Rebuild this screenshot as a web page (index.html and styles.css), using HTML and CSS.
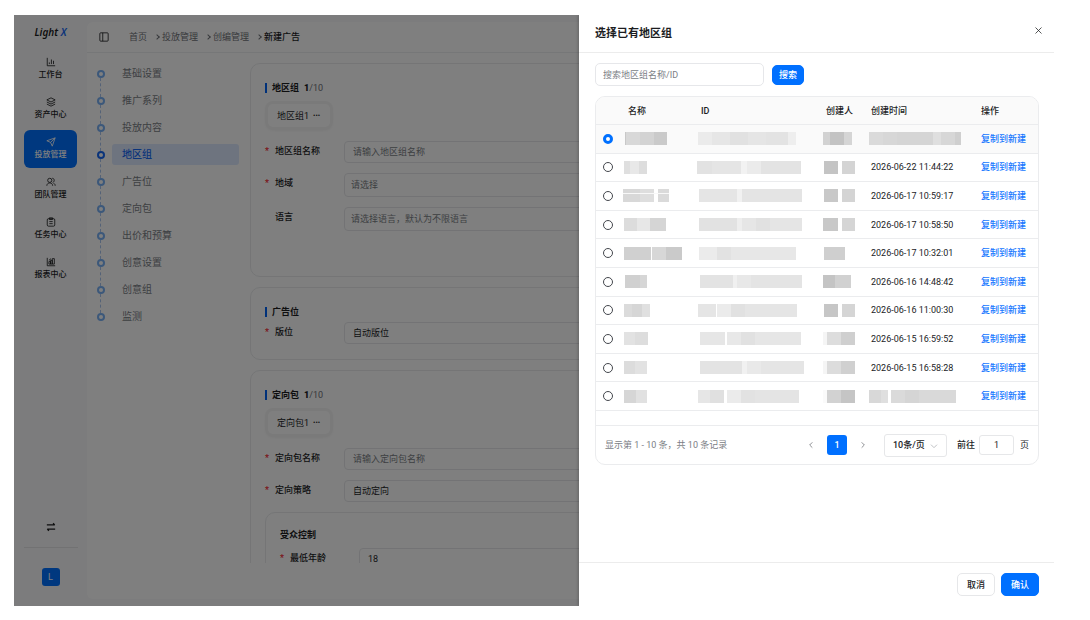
FILE: index.html
```html
<!DOCTYPE html>
<html lang="zh-CN">
<head>
  <meta charset="UTF-8">
  <title>新建广告 - Light X</title>
  <link rel="stylesheet" href="styles.css">
</head>
<body>

  <div class="app">
    <aside class="sidebar">
      <div class="logo">Light <span>X</span></div>
      <nav class="menu">
        <a href="#">
          <svg viewBox="0 0 24 24"><path d="M3 2v19h19M8 17v-4M13 17V6M18 17V9"/></svg>
          工作台
        </a>
        <a href="#">
          <svg viewBox="0 0 24 24"><path d="M12 2 2 7l10 5 10-5zM2 12l10 5 10-5M2 17l10 5 10-5"/></svg>
          资产中心
        </a>
        <a href="#" class="active">
          <svg viewBox="0 0 24 24"><path d="M22 2 2 9l9 4 4 9zM22 2 11 13"/></svg>
          投放管理
        </a>
        <a href="#">
          <svg viewBox="0 0 24 24"><circle cx="9" cy="8" r="5"/><path d="M2 21c0-9 14-9 14 0M15 3c6 0 6 9 1 10M18 15c3 1 4 3 4 6"/></svg>
          团队管理
        </a>
        <a href="#">
          <svg viewBox="0 0 24 24"><rect x="3" y="4" width="18" height="18" rx="3"/><path d="M8 2h8v4H8zM8 11h8M8 16h8"/></svg>
          任务中心
        </a>
        <a href="#">
          <svg viewBox="0 0 24 24"><path d="M3 2v19h19M7 17v-6h4v6zM11 17V8h4v9zM15 17V4h5v13zM7 8l5-4"/></svg>
          报表中心
        </a>
      </nav>
      <div class="sidebar-bottom">
        <button class="switch" aria-label="切换">
          <svg viewBox="0 0 24 24"><path d="M2 7h19M17 3l4 4M22 17H3M7 21l-4-4"/></svg>
        </button>
        <div class="avatar">L</div>
      </div>
    </aside>

    <main class="main">
      <header class="topbar">
        <svg class="toggle" viewBox="0 0 24 24"><rect x="2" y="2" width="20" height="20" rx="2"/><path d="M9 2v20"/></svg>
        <nav class="breadcrumb">
          <a href="#">首页</a>
          <a href="#">投放管理</a>
          <a href="#">创编管理</a>
          <span>新建广告</span>
        </nav>
      </header>

      <div class="workspace">
        <ol class="steps">
          <li><a href="#">基础设置</a></li>
          <li><a href="#">推广系列</a></li>
          <li><a href="#">投放内容</a></li>
          <li class="active"><a href="#">地区组</a></li>
          <li><a href="#">广告位</a></li>
          <li><a href="#">定向包</a></li>
          <li><a href="#">出价和预算</a></li>
          <li><a href="#">创意设置</a></li>
          <li><a href="#">创意组</a></li>
          <li><a href="#">监测</a></li>
        </ol>

        <div class="content">
          <section class="card region-card">
            <h2>地区组 <b>1</b><small>/10</small></h2>
            <button class="tab">地区组1 <span>•••</span></button>
            <div class="field">
              <label class="required" for="regionName">地区组名称</label>
              <input id="regionName" type="text" placeholder="请输入地区组名称">
            </div>
            <div class="field">
              <label class="required" for="region">地域</label>
              <select id="region" class="tall empty"><option>请选择</option></select>
            </div>
            <div class="field">
              <label for="language">语言</label>
              <select id="language" class="tall empty"><option>请选择语言，默认为不限语言</option></select>
            </div>
          </section>

          <section class="card compact">
            <h2>广告位</h2>
            <div class="field">
              <label class="required" for="placement">版位</label>
              <select id="placement"><option>自动版位</option></select>
            </div>
          </section>

          <section class="card">
            <h2>定向包 <b>1</b><small>/10</small></h2>
            <button class="tab">定向包1 <span>•••</span></button>
            <div class="field">
              <label class="required" for="packName">定向包名称</label>
              <input id="packName" type="text" placeholder="请输入定向包名称">
            </div>
            <div class="field">
              <label class="required" for="strategy">定向策略</label>
              <select id="strategy"><option>自动定向</option></select>
            </div>
            <div class="card inner">
              <h3>受众控制</h3>
              <div class="field">
                <label class="required" for="minAge">最低年龄</label>
                <input id="minAge" type="text" value="18">
              </div>
            </div>
          </section>
        </div>
      </div>
    </main>

    <div class="overlay"></div>

    <div class="drawer" role="dialog" aria-labelledby="drawerTitle">
      <header class="drawer-header">
        <h1 id="drawerTitle">选择已有地区组</h1>
        <button class="close" aria-label="关闭">
          <svg viewBox="0 0 24 24"><path d="M4 4l16 16M20 4 4 20"/></svg>
        </button>
      </header>

      <div class="drawer-body">
        <form class="search">
          <input type="text" placeholder="搜索地区组名称/ID" aria-label="搜索地区组名称/ID">
          <button type="button" class="btn primary">搜索</button>
        </form>

        <div class="table-box">
          <table>
            <colgroup>
              <col class="col-radio">
              <col class="col-name">
              <col class="col-id">
              <col class="col-user">
              <col class="col-time">
              <col>
            </colgroup>
            <thead>
              <tr><th></th><th>名称</th><th>ID</th><th>创建人</th><th>创建时间</th><th>操作</th></tr>
            </thead>
            <tbody id="rows"></tbody>
          </table>

          <div class="pager">
            <span class="total">显示第 1 - 10 条，共 10 条记录</span>
            <button class="arrow" aria-label="上一页"><svg viewBox="0 0 24 24"><path d="M16 4 8 12l8 8"/></svg></button>
            <button class="page">1</button>
            <button class="arrow" aria-label="下一页"><svg viewBox="0 0 24 24"><path d="m8 4 8 8-8 8"/></svg></button>
            <div class="page-size">
              <select aria-label="每页条数"><option>10条/页</option></select>
              <svg viewBox="0 0 24 24"><path d="m3 8 9 9 9-9"/></svg>
            </div>
            <label for="jump">前往</label>
            <input id="jump" type="text" value="1">
            <span>页</span>
          </div>
        </div>
      </div>

      <footer class="drawer-footer">
        <button class="btn">取消</button>
        <button class="btn primary">确认</button>
      </footer>
    </div>
  </div>

  <script>
    // masked cells: left offset, then [width, colour] blocks ('' is a gap)
    const rows = [
      {
        name: [5, [1, '#c8c8c8'], [14, '#d8d8d8'], [14, '#d3d3d3'], [13, '#cacaca']],
        id: [5, [14, '#ebebeb'], [18, '#e6e6e6'], [18, '#e1e1e1'], [18, '#e5e5e5'], [22, '#e3e3e3'], [8, '#eeeeee']],
        user: [5, [7, '#d2d2d2'], [14, '#c3c3c3'], [8, '#d5d5d5']],
        time: [6, [14, '#dadada'], [14, '#d7d7d7'], [36, '#d5d5d5'], [8, '#dfdfdf'], [14, '#d7d7d7'], [6, '#cfcfcf']]
      },
      {
        name: [4, [6, '#dfdfdf'], [9, '#e8e8e8'], [8, '#dddddd']],
        id: [4, [15, '#e2e2e2'], [29, '#e5e5e5'], [6, '#f2f2f2'], [14, '#ebebeb'], [40, '#e3e3e3']],
        user: [6, [14, '#c4c4c4'], [4, ''], [13, '#d4d4d4']],
        time: '2026-06-22 11:44:22'
      },
      {
        name: [3, [17, '#d8d8d8'], [14, '#dedede'], [4, ''], [11, '#dadada']],
        split: true,
        id: [6, [38, '#e5e5e5'], [5, '#f1f1f1'], [60, '#e4e4e4']],
        user: [6, [14, '#c8c8c8'], [4, ''], [13, '#d4d4d4']],
        time: '2026-06-17 10:59:17'
      },
      {
        name: [4, [13, '#dcdcdc'], [13, '#e7e7e7'], [16, '#d5d5d5']],
        id: [6, [38, '#e2e2e2'], [5, '#eeeeee'], [14, '#e6e6e6'], [14, '#e1e1e1'], [32, '#e5e5e5']],
        user: [5, [15, '#c8c8c8'], [4, ''], [13, '#d5d5d5']],
        time: '2026-06-17 10:58:50'
      },
      {
        name: [4, [27, '#d0d0d0'], [1, ''], [14, '#d7d7d7'], [16, '#cacaca']],
        id: [6, [18, '#ebebeb'], [14, '#e2e2e2'], [65, '#e7e7e7']],
        user: [6, [21, '#cfcfcf']],
        time: '2026-06-17 10:32:01'
      },
      {
        name: [5, [15, '#d0d0d0'], [7, '#d6d6d6']],
        id: [7, [33, '#e3e3e3'], [4, '#f0f0f0'], [14, '#e8e8e8'], [51, '#e4e4e4']],
        user: [5, [12, '#c4c4c4'], [16, '#d1d1d1']],
        time: '2026-06-16 14:48:42'
      },
      {
        name: [4, [8, '#dbdbdb'], [10, '#d6d6d6'], [8, '#e0e0e0']],
        id: [5, [18, '#e5e5e5'], [1, ''], [14, '#ebebeb'], [14, '#e1e1e1'], [52, '#e5e5e5']],
        user: [6, [14, '#c6c6c6'], [4, ''], [13, '#d5d5d5']],
        time: '2026-06-16 11:00:30'
      },
      {
        name: [4, [11, '#e2e2e2'], [13, '#dddddd']],
        id: [7, [25, '#e6e6e6'], [2, ''], [14, '#e8e8e8'], [14, '#e1e1e1'], [46, '#e6e6e6']],
        user: [5, [4, '#f5f5f5'], [14, '#dddddd'], [14, '#cfcfcf']],
        time: '2026-06-15 16:59:52'
      },
      {
        name: [4, [11, '#dcdcdc'], [12, '#e2e2e2']],
        id: [7, [42, '#e3e3e3'], [5, '#f1f1f1'], [14, '#e9e9e9'], [43, '#e5e5e5']],
        user: [5, [4, '#f5f5f5'], [14, '#dcdcdc'], [14, '#d0d0d0']],
        time: '2026-06-15 16:58:28'
      },
      {
        name: [4, [12, '#d6d6d6'], [11, '#e1e1e1']],
        id: [5, [12, '#e6e6e6'], [14, '#e0e0e0'], [3, ''], [14, '#ebebeb'], [14, '#e2e2e2'], [44, '#e4e4e4']],
        user: [5, [4, '#fafafa'], [14, '#d2d2d2'], [14, '#c5c5c5']],
        time: [6, [12, '#d8d8d8'], [7, '#dfdfdf'], [3, ''], [14, '#dadada'], [14, '#d5d5d5'], [37, '#d9d9d9']]
      }
    ];

    function cell(value, extra) {
      if (typeof value === 'string') return `<td>${value}</td>`;
      const [offset, ...blocks] = value;
      const bars = blocks.map(([w, c]) => `<i style="width:${w}px;background:${c || 'none'}"></i>`).join('');
      return `<td class="masked"><div class="mask ${extra || ''}" style="margin-left:${offset}px">${bars}</div></td>`;
    }

    document.getElementById('rows').innerHTML = rows.map((row, i) => `
      <tr class="${i === 0 ? 'selected' : ''}">
        <td class="pick"><input type="radio" name="group" aria-label="第 ${i + 1} 行" ${i === 0 ? 'checked' : ''}></td>
        ${cell(row.name, row.split ? 'split' : '')}
        ${cell(row.id)}
        ${cell(row.user)}
        ${cell(row.time)}
        <td><a href="#">复制到新建</a></td>
      </tr>`).join('');
  </script>

</body>
</html>
```

FILE: styles.css
```css
*,
*::before,
*::after {
  box-sizing: border-box;
}

body {
  margin: 0;
  padding: 15px 36px 14px 14px;
  height: 100vh;
  background: #fff;
  color: #1c1d1f;
  font-family: Roboto, "Noto Sans CJK SC", sans-serif;
  font-size: 9px;
  line-height: 14px;
}

h1, h2, h3, ol {
  margin: 0;
  padding: 0;
}

a {
  color: inherit;
  text-decoration: none;
}

button, input, select {
  font: inherit;
  color: inherit;
  margin: 0;
}

button {
  border: none;
  background: none;
  padding: 0;
}

svg {
  fill: none;
  stroke: currentColor;
  stroke-width: 2;
}

.app {
  position: relative;
  display: flex;
  height: 100%;
  overflow: hidden;
  background: #f9f9fa;
}

/* sidebar */
.sidebar {
  width: 73px;
  display: flex;
  flex-direction: column;
  padding: 10px 10px 20px;
}

.logo {
  text-align: center;
  font-family: "Noto Sans", sans-serif;
  font-size: 10px;
  font-weight: 600;
  font-style: italic;
}

.logo span {
  color: #1668f5;
}

.menu {
  display: flex;
  flex-direction: column;
  gap: 2px;
  margin-top: 11px;
}

.menu a {
  display: flex;
  flex-direction: column;
  align-items: center;
  height: 38px;
  padding-top: 7px;
  border-radius: 6px;
  font-size: 8px;
  font-weight: 500;
  line-height: 16px;
}

.menu svg {
  width: 10px;
  height: 10px;
}

.menu .active {
  background: #0070ff;
  color: #fff;
}

.sidebar-bottom {
  margin-top: auto;
}

.switch {
  display: block;
  margin: 0 auto;
}

.switch svg {
  display: block;
  width: 10px;
  height: 10px;
  stroke-width: 3;
}

.avatar {
  position: relative;
  width: 18px;
  height: 18px;
  margin: 36px auto 0;
  border-radius: 3px;
  background: #0070ff;
  color: #fff;
  text-align: center;
  line-height: 18px;
}

.avatar::before {
  content: "";
  position: absolute;
  left: -18px;
  right: -18px;
  top: -21px;
  border-top: 1px solid #e4e5e7;
}

/* main panel */
.main {
  flex: 1;
  min-width: 0;
  display: flex;
  flex-direction: column;
  margin: 7px 7px 7px 0;
  border-radius: 6px;
  background: #fff;
}

.topbar {
  display: flex;
  align-items: center;
  gap: 20px;
  height: 31px;
  padding-left: 12px;
  border-bottom: 1px solid #eceef0;
}

.toggle {
  width: 10px;
  height: 10px;
}

.breadcrumb {
  display: flex;
  color: #6f7278;
}

.breadcrumb span {
  color: #1c1d1f;
  font-weight: 500;
}

.breadcrumb a::after {
  content: "";
  display: inline-block;
  width: 4px;
  height: 4px;
  margin: 0 3px 1px 8px;
  border: solid #6f7278;
  border-width: 1px 1px 0 0;
  transform: rotate(45deg);
}

.workspace {
  flex: 1;
  min-height: 0;
  display: flex;
  gap: 11px;
  padding: 10px 12px 36px 8px;
}

.steps {
  width: 144px;
  list-style: none;
  font-size: 10px;
  color: #7b7e85;
}

.steps li {
  position: relative;
  height: 21px;
  margin-bottom: 6px;
  padding-left: 17px;
}

.steps a {
  display: block;
  padding-left: 10px;
  border-radius: 3px;
  line-height: 21px;
}

.steps li::before {
  content: "";
  position: absolute;
  left: 2px;
  top: 7px;
  width: 8px;
  height: 8px;
  border: 2px solid #78b0f5;
  border-radius: 50%;
}

.steps li:not(:last-child)::after {
  content: "";
  position: absolute;
  left: 5px;
  top: 15px;
  height: 19px;
  border-left: 1px dashed #a8c4ee;
}

.steps .active {
  color: #1668f5;
  font-weight: 500;
}

.steps .active a {
  background: #dce9ff;
}

.steps .active::before {
  border-color: #1668f5;
}

.content {
  flex: 1;
  min-width: 0;
  overflow: hidden;
}

.card {
  margin-bottom: 10px;
  padding: 17px 15px 16px 14px;
  border: 1px solid #eaebed;
  border-radius: 10px;
}

.region-card {
  padding-bottom: 35px;
}

.card h2 {
  display: flex;
  align-items: center;
  font-size: 9px;
  font-weight: 700;
}

.card h2::before {
  content: "";
  width: 2px;
  height: 10px;
  margin-right: 5px;
  background: #0063f5;
}

.card b {
  margin-left: 5px;
}

.card small {
  font-size: 9px;
  font-weight: 400;
  color: #6f7278;
}

.tab {
  display: flex;
  align-items: center;
  gap: 4px;
  height: 23px;
  margin: 9px 3px 14px;
  padding: 0 10px 0 9px;
  border-radius: 5px;
  background: #fff;
  box-shadow: 0 0 0 3px #f5f5f5, 0 1px 5px rgba(0, 0, 0, 0.2);
}

.tab span {
  font-size: 7px;
}

.field {
  display: flex;
  margin-bottom: 10px;
}

.field label {
  width: 79px;
  padding: 3px 0 0 10px;
  font-weight: 500;
}

.field .required::before {
  content: "*";
  float: left;
  margin-left: -10px;
  color: #f5222d;
}

.field input,
.field select {
  flex: 1;
  min-width: 0;
  height: 22px;
  padding: 0 8px;
  border: 1px solid #e6e7ea;
  border-radius: 4px;
  background: #fff;
  appearance: none;
}

.field .tall {
  height: 24px;
  padding-left: 6px;
}

.field .empty {
  color: #7b7e85;
}

.field input::placeholder {
  color: #7b7e85;
}

.compact {
  padding-bottom: 5px;
}

.compact .field {
  margin-top: 3px;
}

.inner {
  padding-top: 15px;
}

.inner h3 {
  font-size: 9px;
  font-weight: 700;
}

.inner .field {
  margin-top: 6px;
}

.overlay {
  position: absolute;
  inset: 0;
  background: rgba(0, 0, 0, 0.5);
}

/* drawer */
.drawer {
  position: absolute;
  top: 0;
  right: 0;
  bottom: 0;
  width: 475px;
  display: flex;
  flex-direction: column;
  background: #fff;
  box-shadow: -1px 0 3px rgba(0, 0, 0, 0.2);
}

.drawer-header {
  display: flex;
  justify-content: space-between;
  height: 38px;
  padding: 11px 11px 0 16px;
  border-bottom: 1px solid #ececec;
}

.drawer-header h1 {
  font-size: 11px;
  font-weight: 700;
  line-height: 16px;
}

.close {
  height: 9px;
}

.close svg {
  display: block;
  width: 9px;
  height: 9px;
}

.drawer-body {
  flex: 1;
  padding: 10px 15px 0 16px;
}

.search {
  display: flex;
  align-items: center;
  gap: 8px;
  margin-bottom: 10px;
}

.search input {
  width: 169px;
  height: 23px;
  padding: 0 7px;
  border: 1px solid #e6e7ea;
  border-radius: 5px;
}

.search input::placeholder {
  color: #7b7e85;
}

.btn {
  height: 23px;
  padding: 0 9px;
  border: 1px solid #e6e7e9;
  border-radius: 5px;
  background: #fff;
  font-weight: 500;
}

.btn.primary {
  border-color: #0070ff;
  background: #0070ff;
  color: #fff;
}

.search .btn {
  height: 20px;
  padding: 0 6px;
}

.table-box {
  overflow: hidden;
  border: 1px solid #ebecee;
  border-radius: 10px;
}

/* rows share the height evenly */
table {
  width: 100%;
  height: 314px;
  table-layout: fixed;
  border-collapse: separate;
  border-spacing: 0;
}

.col-radio { width: 24px; }
.col-name { width: 73px; }
.col-id { width: 125px; }
.col-user { width: 45px; }
.col-time { width: 110px; }

th, td {
  padding: 0 0 0 8px;
  border-bottom: 1px solid #ebecee;
  text-align: left;
  white-space: nowrap;
}

th {
  height: 28px;
  background: #fafafa;
  font-weight: 500;
}

.selected td {
  background: #fafafa;
}

td a {
  color: #1677ff;
  font-weight: 500;
}

.pick {
  padding-left: 7px;
}

.pick input {
  display: block;
  width: 10px;
  height: 10px;
  border: 1px solid #44474d;
  border-radius: 50%;
  background: #fff;
  appearance: none;
}

.pick input:checked {
  border: 3px solid #0070ff;
}

.masked {
  padding-left: 0;
}

.mask {
  position: relative;
  display: flex;
  width: fit-content;
  height: 13px;
}

.mask i {
  flex: none;
}

.split::after {
  content: "";
  position: absolute;
  left: 0;
  right: 0;
  top: 4px;
  border-top: 1px solid #f8f8f8;
}

.pager {
  display: flex;
  align-items: center;
  height: 39px;
  margin-top: 14px;
  padding: 0 9px;
  border-top: 1px solid #ebecee;
}

.total {
  margin-right: auto;
  color: #7b7e85;
}

.arrow {
  display: flex;
  justify-content: center;
  width: 20px;
  color: #55585e;
}

.arrow svg {
  width: 8px;
  height: 8px;
}

.page {
  width: 20px;
  height: 20px;
  margin: 0 6px;
  border-radius: 3px;
  background: #0070ff;
  color: #fff;
  font-weight: 500;
}

.page-size {
  position: relative;
  margin: 0 10px 0 11px;
}

.page-size select {
  display: block;
  width: 63px;
  height: 23px;
  padding: 0 8px;
  border: 1px solid #e6e7e9;
  border-radius: 3px;
  background: #fff;
  font-weight: 500;
  appearance: none;
}

.page-size svg {
  position: absolute;
  right: 9px;
  top: 8px;
  width: 8px;
  height: 8px;
  color: #a0a3a8;
}

.pager label {
  font-weight: 500;
}

.pager input {
  width: 35px;
  height: 20px;
  margin: 0 6px 0 4px;
  padding: 0;
  border: 1px solid #e6e7e9;
  border-radius: 3px;
  text-align: center;
}

.drawer-footer {
  display: flex;
  justify-content: flex-end;
  gap: 6px;
  height: 44px;
  padding: 10px 15px 0 0;
  border-top: 1px solid #ececec;
}
```
